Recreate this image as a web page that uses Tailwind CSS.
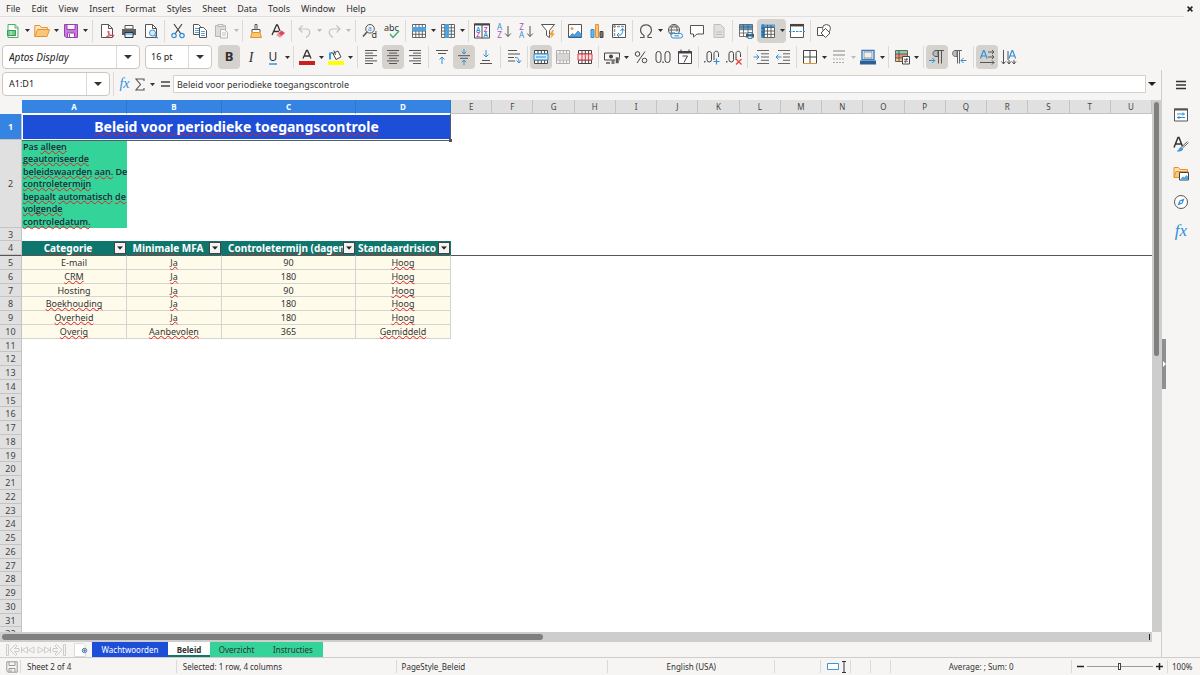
<!DOCTYPE html>
<html lang="nl">
<head>
<meta charset="utf-8">
<title>Beleid</title>
<script src="https://cdn.jsdelivr.net/npm/@tailwindcss/browser@4"></script>
</head>
<body class="flex h-screen flex-col overflow-hidden bg-[#f6f5f4] font-['Noto_Sans','Open_Sans',sans-serif] text-[9px] text-[#303030]">

<svg class="hidden" aria-hidden="true">
  <symbol id="caret" viewBox="0 0 5 3"><path d="M0 0h5L2.500 3z" fill="currentColor"/></symbol>
</svg>

<!-- Menu bar -->
<header class="flex h-[17px] shrink-0 items-stretch">
  <nav class="flex flex-1 items-center gap-[11px] border-b border-[#e0dfdd] pt-[2px] pl-[6px]" aria-label="Menu">
    <button>File</button><button>Edit</button><button>View</button><button>Insert</button><button>Format</button><button>Styles</button><button>Sheet</button><button>Data</button><button>Tools</button><button>Window</button><button>Help</button>
  </nav>
  <button class="flex w-4 items-center pl-[3px]" aria-label="Close"><svg class="size-[6px]" viewBox="0 0 5 5"><path d="M.5.5l4 4M4.500.5l-4 4" stroke="#222" stroke-width="1.300"/></svg></button>
</header>

<!-- Standard toolbar -->
<div role="toolbar" aria-label="Standard" class="flex h-[27px] shrink-0 items-center pl-[2px] [&>button]:flex [&>button]:h-6 [&>button]:w-[22px] [&>button]:shrink-0 [&>button]:items-center [&>button]:justify-center [&>button.dd]:w-[7px] [&>i]:h-[22px] [&>i]:w-[5px] [&>i]:shrink-0 [&>i]:bg-[linear-gradient(#dcdad8,#dcdad8)] [&>i]:bg-[size:1px_100%] [&>i]:bg-center [&>i]:bg-no-repeat [&>i.wide]:w-[7px] [&_svg]:size-4 [&_svg]:overflow-visible [&_svg]:fill-none [&_.dd>svg]:h-[3px] [&_.dd>svg]:w-[5px]">
  <button aria-label="New"><svg viewBox="0 0 16 16"><path d="M3 1.500h7l3 3v10H3z" fill="#fff" stroke="#4caf6a"/><path d="M10 1v4h3" stroke="#4caf6a"/><path d="M2 7h9v6H2z" fill="#35a554"/><path d="M3 9h7M3 11h7M6 8v4" stroke="#fff" stroke-width=".7"/></svg></button><button class="dd" aria-label="New options"><svg><use href="#caret"/></svg></button>
  <button aria-label="Open"><svg viewBox="0 0 16 16"><path d="M.8 13.500v-11h5l1.500 2h6v3" fill="#fbe6c5" stroke="#e8922b"/><path d="M.8 13.500 3.500 6.500h12l-2.500 7z" fill="#f9c77c" stroke="#e8922b"/></svg></button><button class="dd" aria-label="Open options"><svg><use href="#caret"/></svg></button>
  <button aria-label="Save"><svg viewBox="0 0 16 16"><path d="M1.500 1.500h13v13H3l-1.500-1.500z" fill="#c77dd8" stroke="#9b3fb5"/><path d="M4 1.500h8v5H4z" fill="#fff" stroke="#9b3fb5"/><path d="M4.500 10h7v4.500h-7z" fill="#fff" stroke="#9b3fb5"/><path d="M6.500 11v3" stroke="#9b3fb5"/></svg></button><button class="dd" aria-label="Save options"><svg><use href="#caret"/></svg></button>
  <i class="wide"></i>
  <button aria-label="Export as PDF"><svg viewBox="0 0 16 16"><path d="M2.500 1.500h7l4 4v9h-11z" fill="#fff" stroke="#555"/><path d="M9.500 1.500v4h4" stroke="#555"/><path d="M7 14.500c3-2 3.500-6 2.500-6.500s-1 2 2 4 4 1 3.500.5-4-.5-8 2z" stroke="#e0304b"/></svg></button>
  <button aria-label="Print"><svg viewBox="0 0 16 16"><path d="M4 2.500h8V6H4z" fill="#fff" stroke="#555"/><path d="M1 6h14v6H1z" fill="#5d6266"/><path d="M4 9.500h8v5H4z" fill="#e8f3fb" stroke="#333"/><path d="M4 11h8" stroke="#2f8fd8"/></svg></button>
  <button aria-label="Print preview"><svg viewBox="0 0 16 16"><path d="M2.500 1.500h7l4 4v9h-11z" fill="#fff" stroke="#555"/><path d="M9.500 1.500v4h4" stroke="#555"/><circle cx="9.500" cy="10" r="3" fill="#d9ecfa" stroke="#3c95d6"/><path d="m11.700 12.200 3 3" stroke="#3c95d6" stroke-width="1.300"/></svg></button>
  <i></i>
  <button aria-label="Cut"><svg viewBox="0 0 16 16"><path d="m4 1 7 10M12 1 5 11" stroke="#444" stroke-width="1.200"/><circle cx="4" cy="12.500" r="2.200" stroke="#2f8fd8" stroke-width="1.200"/><circle cx="12" cy="12.500" r="2.200" stroke="#2f8fd8" stroke-width="1.200"/></svg></button>
  <button aria-label="Copy"><svg viewBox="0 0 16 16"><path d="M1.500 1.500h5l2 2v8h-7z" fill="#fff" stroke="#555"/><path d="M3 5.500h4M3 7.500h4M3 9.500h4" stroke="#2f8fd8" stroke-width=".8"/><path d="M7.500 4.500h4l3 3v7h-7z" fill="#fff" stroke="#555"/><path d="M9 8.500h4M9 10.500h4M9 12.500h4" stroke="#2f8fd8" stroke-width=".8"/></svg></button>
  <button aria-label="Paste" class="opacity-50"><svg viewBox="0 0 16 16"><path d="M1.500 2.500h10v11h-10z" fill="#c5c5c5" stroke="#777"/><path d="M4 1.500h5v2H4z" fill="#eee" stroke="#777"/><path d="M6.500 6.500h4l3 3v5.500h-7z" fill="#fff" stroke="#777"/><path d="M8 10h4M8 12h4" stroke="#777" stroke-width=".8"/></svg></button><button class="dd text-[#bbb]" aria-label="Paste options"><svg><use href="#caret"/></svg></button>
  <i></i>
  <button aria-label="Clone formatting"><svg viewBox="0 0 16 16"><path d="M7 1.500h2v5H7z" fill="#fff" stroke="#555"/><path d="M4 6.500h8v3H4z" fill="#fff" stroke="#555"/><path d="M4 9.500h8l1.500 5h-11z" fill="#f9c77c" stroke="#e8922b"/></svg></button>
  <button aria-label="Clear formatting"><svg viewBox="0 0 16 16"><path d="m2 12 4.500-10h1L10 8M4 8.500h5" stroke="#333" stroke-width="1.300"/><path d="m6.500 12 5-4.500 3.500 2.500-5 4.500z" fill="#e0465a"/><path d="m6.500 12 2-1.700 3.300 2.600L10 14.500z" fill="#f39aa6"/></svg></button>
  <i></i>
  <button aria-label="Undo" class="text-[#c4c4c4]"><svg viewBox="0 0 16 16"><path d="M5.500 2.500 2 6l3.500 3.500M2 6h7c4.500 0 5.500 5 0 8.500" stroke="currentColor" stroke-width="1.200"/></svg></button><button class="dd text-[#bbb]" aria-label="Undo list"><svg><use href="#caret"/></svg></button>
  <button aria-label="Redo" class="text-[#c4c4c4]"><svg viewBox="0 0 16 16"><path d="M10.500 2.500 14 6l-3.500 3.500M14 6H7c-4.500 0-5.500 5 0 8.500" stroke="currentColor" stroke-width="1.200"/></svg></button><button class="dd text-[#bbb]" aria-label="Redo list"><svg><use href="#caret"/></svg></button>
  <i class="wide"></i>
  <button aria-label="Find and replace"><svg viewBox="0 0 16 16"><circle cx="8" cy="5.800" r="4.300" stroke="#555"/><path d="M5 9 1 13.500" stroke="#555" stroke-width="1.600"/><text x="5.700" y="8.300" font-size="7" fill="#2f8fd8">a</text><text x="9.500" y="15" font-size="9" fill="#333">d</text></svg></button>
  <button aria-label="Spelling"><svg viewBox="0 0 16 16"><text x="0" y="7.500" font-size="9" fill="#333">abc</text><path d="m6 11 3 3.500 6-6.500" stroke="#3cb068" stroke-width="1.400"/></svg></button>
  <i></i>
  <button aria-label="Row"><svg viewBox="0 0 16 16"><path d="M1.500 1.500h13v13h-13z" fill="#fff"/><path d="M1.500 1.500h13v13h-13zM1.500 4.500h13M1.500 8h13M1.500 11.300h13M4.800 1.500v13M8 1.500v13M11.300 1.500v13" stroke="#555" stroke-width=".9"/><path d="M1 4h14v4H1z" fill="#4ba3e3"/></svg></button><button class="dd" aria-label="Row options"><svg><use href="#caret"/></svg></button>
  <button aria-label="Column"><svg viewBox="0 0 16 16"><path d="M1.500 1.500h13v13h-13z" fill="#fff"/><path d="M1.500 1.500h13v13h-13zM1.500 4.800h13M1.500 8h13M1.500 11.300h13M4.800 1.500v13M8 1.500v13M11.300 1.500v13" stroke="#555" stroke-width=".9"/><path d="M5 1h4v14H5z" fill="#4ba3e3"/></svg></button><button class="dd" aria-label="Column options"><svg><use href="#caret"/></svg></button>
  <i></i>
  <button aria-label="Sort"><svg viewBox="0 0 16 16"><path d="M.5 1h15v14H.5zM8 1v14" fill="#fff" stroke="#444"/><path d="M0 1.500h16" stroke="#444" stroke-width="2"/><g font-size="6.500" font-weight="600"><text x="2" y="8.600" fill="#2f8fd8">A</text><text x="2.200" y="14" fill="#b04cc5">Z</text><text x="9.700" y="8.600" fill="#b04cc5">Z</text><text x="9.500" y="14" fill="#2f8fd8">A</text></g></svg></button>
  <button aria-label="Sort ascending"><svg viewBox="0 0 16 16"><g font-size="8"><text x="1" y="7" fill="#2f8fd8">A</text><text x="1.300" y="15" fill="#b04cc5">Z</text></g><path d="M12 3v10.500m-2.800-3 2.800 3 2.800-3" stroke="#555"/></svg></button>
  <button aria-label="Sort descending"><svg viewBox="0 0 16 16"><g font-size="8"><text x="1.300" y="7" fill="#b04cc5">Z</text><text x="1" y="15" fill="#2f8fd8">A</text></g><path d="M12 3v10.500m-2.800-3 2.800 3 2.800-3" stroke="#555"/></svg></button>
  <button aria-label="AutoFilter"><svg viewBox="0 0 16 16"><path d="M1.500 1.500h13l-5 6v7l-3-2v-5z" fill="#fff" stroke="#555"/><path d="m12.500 7-3.500 5h2.500l-1 3.500 4.500-5h-2.500l1.500-3.500z" fill="#f0a03c"/></svg></button>
  <i></i>
  <button aria-label="Insert image"><svg viewBox="0 0 16 16"><path d="M1.500 1.500h13v13h-13z" fill="#fff" stroke="#555"/><circle cx="5" cy="5.500" r="1.500" fill="#f0a03c"/><path d="m2 14 3.500-3.500 2 1.500L11 8l3.500 3.500V14z" fill="#4ba3e3" stroke="#2678b8" stroke-width=".7"/></svg></button>
  <button aria-label="Insert chart"><svg viewBox="0 0 16 16"><path d="M2 6.500h3v8H2z" fill="#6cb6ec" stroke="#2f8fd8"/><path d="M6.500 1.500h3v13h-3z" fill="#f9c77c" stroke="#e8922b"/><path d="M11 8.500h3v6h-3z" fill="#777" stroke="#444"/></svg></button>
  <button aria-label="Pivot table"><svg viewBox="0 0 16 16"><path d="M1.500 1.500h13v13h-13z" fill="#fff" stroke="#555"/><path d="M2 3.500h12M3.500 2v12" stroke="#999" stroke-width="1.500" stroke-dasharray="3 1"/><path d="M6 12c5 1 6-2 5.500-6M9.500 8l2-2.500 2 2.500M8 10l-2 2 2 2" stroke="#2f8fd8"/></svg></button>
  <i></i>
  <button aria-label="Special character"><svg viewBox="0 0 16 16"><path d="M2 14.500h4v-2C.5 9 2 1.800 8 1.800S15.500 9 10 12.500v2h4" stroke="#555" stroke-width="1.200"/></svg></button><button class="dd" aria-label="Special characters"><svg><use href="#caret"/></svg></button>
  <button aria-label="Hyperlink"><svg viewBox="0 0 16 16"><circle cx="7" cy="7" r="5.500" stroke="#555"/><path d="M1.500 7h11M3 4h8M3 10h5M7 1.500C3.500 4 3.500 9 6 12M7 1.500c3 2 3.500 5 2.800 7" stroke="#555" stroke-width=".9"/><rect x="4" y="10.500" width="11.500" height="4.500" rx="2.200" fill="#f6f5f4" stroke="#2f8fd8"/><path d="M7.500 12.800h4.500" stroke="#2f8fd8"/></svg></button>
  <button aria-label="Comment"><svg viewBox="0 0 16 16"><path d="M1.500 2.500h13v8.500H8L4.500 14v-3h-3z" fill="#fff" stroke="#555"/></svg></button>
  <button aria-label="Headers and footers" class="opacity-50"><svg viewBox="0 0 16 16"><path d="M3 1.500h6.500L13 5v9.500H3z" fill="#ccc" stroke="#888"/><path d="M5 9h6M5 11.500h6" stroke="#888"/></svg></button>
  <i></i>
  <button aria-label="Define print area"><svg viewBox="0 0 16 16"><path d="M1.500 1.500h13v12h-13z" fill="#fff"/><path d="M1.500 1.500h13v5h-13z" fill="#4ba3e3"/><path d="M1.500 1.500h13v12h-13zM1.500 4h13M1.500 6.700h13M1.500 10h13M5.500 1.500v12M10 1.500v12" stroke="#555" stroke-width=".8"/><path d="M8 11h8v3.500H8z" fill="#555"/><path d="M10 9.500h4v2h-4zM10 13h4v2.500h-4z" fill="#d9ecfa" stroke="#2f6ea0" stroke-width=".8"/></svg></button>
  <button aria-label="Freeze rows and columns" aria-pressed="true" class="rounded-l bg-[#d5d2ce]"><svg viewBox="0 0 16 16"><path d="M3.500 3.500h11v11h-11z" fill="#fff"/><path d="M1 1.500h14v3H5V15H1z" fill="#4ba3e3"/><path d="M4 4.500h10.500v10H4zM4 8h10.500M4 11.300h10.500M7.500 2v12.500M11 2v12.500" stroke="#555" stroke-width=".9"/><path d="M1 5h4M3 1v14M1 9h3M1 12h3" stroke="#1769aa"/></svg></button><button class="dd rounded-r bg-[#d5d2ce]" aria-label="Freeze options"><svg><use href="#caret"/></svg></button>
  <button aria-label="Split window"><svg viewBox="0 0 16 16"><path d="M1.500 1.500h13v13h-13z" fill="#fff" stroke="#555"/><path d="M1 2.200h14" stroke="#444" stroke-width="2.500"/><path d="M0 8.500h16" stroke="#2f8fd8" stroke-dasharray="2.500 1"/></svg></button>
  <i></i>
  <button aria-label="Show draw functions"><svg viewBox="0 0 16 16"><path d="M1.500 4.500h8v8h-8z" fill="#fff" stroke="#555"/><circle cx="10.500" cy="5.500" r="4" fill="#fff" stroke="#555"/><path d="m9.500 5.500 4.500 4.500-4.500 4.500L5 10z" fill="#fff" stroke="#555"/></svg></button>
</div>

<!-- Formatting toolbar -->
<div role="toolbar" aria-label="Formatting" class="flex h-[26px] shrink-0 items-center pl-[2px] [&>button]:flex [&>button]:h-6 [&>button]:w-[22px] [&>button]:shrink-0 [&>button]:items-center [&>button]:justify-center [&>button]:rounded [&>button[aria-pressed=true]]:bg-[#d5d2ce] [&>button.dd]:w-[7px] [&>i]:h-[22px] [&>i]:w-[5px] [&>i]:shrink-0 [&>i]:bg-[linear-gradient(#dcdad8,#dcdad8)] [&>i]:bg-[size:1px_100%] [&>i]:bg-center [&>i]:bg-no-repeat [&>i.wide]:w-[6px] [&>button>svg]:size-4 [&_svg]:fill-none [&_.dd>svg]:h-[3px] [&_.dd>svg]:w-[5px]">
  <div class="mr-[5px] flex h-6 w-[138px] shrink-0 overflow-hidden rounded-[4px] border border-[#cdc7c2] bg-white">
    <input aria-label="Font name" value="Aptos Display" class="min-w-0 flex-1 pl-[6px] text-[10px] italic text-[#222] outline-none">
    <button aria-label="Font list" class="flex w-[23px] items-center justify-center border-l border-[#dcd8d4]"><svg class="h-[4px] w-[8px]" viewBox="0 0 8 4"><path d="M0 0h8L4 4z" fill="#333"/></svg></button>
  </div>
  <div class="mr-[6px] flex h-6 w-[67px] shrink-0 overflow-hidden rounded-[4px] border border-[#cdc7c2] bg-white">
    <input aria-label="Font size" value="16 pt" class="min-w-0 flex-1 pl-[5px] text-[9px] text-[#222] outline-none">
    <button aria-label="Size list" class="flex w-[23px] items-center justify-center border-l border-[#dcd8d4]"><svg class="h-[4px] w-[8px]" viewBox="0 0 8 4"><path d="M0 0h8L4 4z" fill="#333"/></svg></button>
  </div>
  <button aria-label="Bold" aria-pressed="true" class="text-[13px] font-bold">B</button>
  <button aria-label="Italic" class="font-['Liberation_Serif',serif] text-[14px] italic">I</button>
  <button aria-label="Underline"><span class="border-b-2 border-[#5fb1ea] text-[12px] leading-[13px]">U</span></button><button class="dd" aria-label="Underline style"><svg><use href="#caret"/></svg></button>
  <i></i>
  <button aria-label="Font color"><svg viewBox="0 0 16 16"><path d="m4 9.500 3.500-8h1l3.500 8M5.500 7h5" stroke="#333" stroke-width="1.300"/><path d="M0 12h16v4H0z" fill="#c9211e"/></svg></button><button class="dd" aria-label="Font color list"><svg><use href="#caret"/></svg></button>
  <button aria-label="Highlighting"><svg viewBox="0 0 16 16"><path d="M5 4.500 10 2l3 6-5 2.500z" fill="#fff" stroke="#444"/><path d="M7.500 6 6 1.500" stroke="#444"/><path d="M2 3.500v7M3 3.500l2 1" stroke="#2f8fd8" stroke-width="1.800"/><path d="M0 12h16v4H0z" fill="#ffff00"/></svg></button><button class="dd" aria-label="Highlighting list"><svg><use href="#caret"/></svg></button>
  <i class="wide"></i>
  <button aria-label="Align left"><svg viewBox="0 0 16 16"><path d="M2 1.500h12M2 4.100h8M2 6.700h12M2 9.300h8M2 11.900h12M2 14.500h8" stroke="#555"/></svg></button>
  <button aria-label="Align center" aria-pressed="true"><svg viewBox="0 0 16 16"><path d="M2 1.500h12M4 4.100h8M2 6.700h12M4 9.300h8M2 11.900h12M4 14.500h8" stroke="#555"/></svg></button>
  <button aria-label="Align right"><svg viewBox="0 0 16 16"><path d="M2 1.500h12M6 4.100h8M2 6.700h12M6 9.300h8M2 11.900h12M6 14.500h8" stroke="#555"/></svg></button>
  <i></i>
  <button aria-label="Align top"><svg viewBox="0 0 16 16"><path d="M2 1.500h12M4 4.500h8" stroke="#555"/><path d="M8 15V8m-2.500 2.500L8 8l2.500 2.500" stroke="#2f8fd8"/></svg></button>
  <button aria-label="Center vertically" aria-pressed="true"><svg viewBox="0 0 16 16"><path d="M2 6.700h12M4 9.300h8" stroke="#555"/><path d="M8 0v5M5.800 2.800 8 5l2.200-2.200M8 16v-5m-2.200 2.200L8 11l2.200 2.200" stroke="#2f8fd8"/></svg></button>
  <button aria-label="Align bottom"><svg viewBox="0 0 16 16"><path d="M4 11.500h8M2 14.500h12" stroke="#555"/><path d="M8 1v7M5.500 5.500 8 8l2.500-2.500" stroke="#2f8fd8"/></svg></button>
  <i class="wide"></i>
  <button aria-label="Wrap text"><svg viewBox="0 0 16 16"><path d="M2 1.500h9M2 5h12M2 8.500h6M2 12h7" stroke="#555"/><path d="M9 8.500c3 0 4 1 4 5M10.500 11.500 13 14l2-2.500" stroke="#2f8fd8"/></svg></button>
  <i></i>
  <button aria-label="Merge and center" aria-pressed="true"><svg viewBox="0 0 16 16"><path d="M1.500 1.500h13v13h-13z" fill="#fff" stroke="#444"/><path d="M1.500 5h13M1.500 11h13M5 1.500V5M8.300 1.500V5M11.600 1.500V5M5 11v3.500M8.300 11v3.500M11.600 11v3.500" stroke="#444"/><path d="M1 5h14v6H1z" fill="#d9ecfa" stroke="#2f8fd8"/><path d="M3 8h10" stroke="#2f8fd8"/></svg></button>
  <button aria-label="Merge cells" class="opacity-40"><svg viewBox="0 0 16 16"><path d="M1.500 1.500h13v13h-13zM1.500 5h13M1.500 11h13M5 1.500V5M8.300 1.500V5M11.600 1.500V5M5 11v3.500M8.300 11v3.500M11.600 11v3.500" stroke="#444"/><path d="M2 5.500h12v5H2z" fill="#aaa"/></svg></button>
  <button aria-label="Unmerge cells"><svg viewBox="0 0 16 16"><path d="M1.500 1.500h13v13h-13z" fill="#fff" stroke="#444"/><path d="M1.500 5h13M1.500 11h13M5 1.500V5M8.300 1.500V5M11.600 1.500V5M5 11v3.500M8.300 11v3.500M11.600 11v3.500" stroke="#444"/><path d="M1 5h14v6H1zM5 5v6M8.300 5v6M11.600 5v6" fill="#fde3e5" stroke="#d93a45"/></svg></button>
  <i></i>
  <button aria-label="Currency"><svg viewBox="0 0 16 16"><path d="M.5 4h15v7H.5z" stroke="#444"/><circle cx="7" cy="7.500" r="2" fill="#444"/><path d="M7.500 11h3v4h-3z" fill="#777"/><path d="M11.500 8h3.500v6.500h-3.500z" fill="#555" stroke="#f6f5f4" stroke-width=".6"/><path d="M2 14h4" stroke="#555" stroke-width="1.500"/></svg></button><button class="dd" aria-label="Currency list"><svg><use href="#caret"/></svg></button>
  <button aria-label="Percent"><svg viewBox="0 0 16 16"><circle cx="4.500" cy="5" r="2.300" stroke="#444"/><circle cx="11.500" cy="11.500" r="2.300" stroke="#444"/><path d="M12 2.500 4 14" stroke="#444"/></svg></button>
  <button aria-label="Number"><svg viewBox="0 0 16 16"><rect x="1" y="2.500" width="5" height="11" rx="2.500" stroke="#444"/><rect x="10" y="2.500" width="5" height="11" rx="2.500" stroke="#444"/><path d="M8 12.500v1.500" stroke="#444" stroke-width="1.300"/></svg></button>
  <button aria-label="Date"><svg viewBox="0 0 16 16"><path d="M1.500 2.500h13v12h-13z" fill="#fff" stroke="#444"/><path d="M1 3.500h14" stroke="#444" stroke-width="2"/><path d="M4 .5v3M12 .5v3" stroke="#444"/><path d="M5.500 7h5L7 13.500" stroke="#444"/></svg></button>
  <i></i>
  <button aria-label="Add decimal place"><svg viewBox="0 0 16 16"><path d="M.8 12v1.500" stroke="#444" stroke-width="1.300"/><rect x="3" y="2.500" width="4.500" height="10.500" rx="2.250" stroke="#444"/><path d="M10 11V4.500c0-3 4.500-3 4.500 0V8" stroke="#444"/><path d="M12.500 9.500v6M9.500 12.500h6" stroke="#2f8fd8" stroke-width="1.200"/></svg></button>
  <button aria-label="Delete decimal place"><svg viewBox="0 0 16 16"><path d="M.8 12v1.500" stroke="#444" stroke-width="1.300"/><rect x="3" y="2.500" width="4.500" height="10.500" rx="2.250" stroke="#444"/><path d="M10 11V4.500c0-3 4.500-3 4.500 0V8" stroke="#444"/><path d="m10 10 5.500 5.500m0-5.500L10 15.500" stroke="#e04040" stroke-width="1.200"/></svg></button>
  <i></i>
  <button aria-label="Increase indent"><svg viewBox="0 0 16 16"><path d="M4 1.500h12M8 4.800h8M8 8h8M8 11.300h8M4 14.500h12" stroke="#666"/><path d="M.5 8h5.500M3.500 5.500 6 8l-2.500 2.500" stroke="#2f8fd8"/></svg></button>
  <button aria-label="Decrease indent"><svg viewBox="0 0 16 16"><path d="M3 1.500h12M8 4.800h7M8 8h7M8 11.300h7M3 14.500h12" stroke="#666"/><path d="M6.500 8H1M3.500 5.500 1 8l2.500 2.500" stroke="#2f8fd8"/></svg></button>
  <i></i>
  <button aria-label="Borders"><svg viewBox="0 0 16 16"><path d="M1.500 1.500h13v13h-13z" fill="#fff" stroke="#444"/><path d="M8 1.500v13M1.500 8h13" stroke="#444"/><path d="M1 14.500h14" stroke="#e8922b"/></svg></button><button class="dd" aria-label="Borders list"><svg><use href="#caret"/></svg></button>
  <button aria-label="Border style"><svg viewBox="0 0 16 16"><path d="M2 2h12M2 6h12" stroke="#aaa" stroke-width="1.500"/><path d="M2 10h12M2 13.500h12" stroke="#aaa" stroke-dasharray="2 1"/></svg></button><button class="dd text-[#bbb]" aria-label="Border styles"><svg><use href="#caret"/></svg></button>
  <button aria-label="Border color"><svg viewBox="0 0 16 16"><path d="M2 1.500h12v9H2z" fill="#fff" stroke="#3a7cc0" stroke-width="1.400"/><path d="M4 3h8v6H4z" fill="#eee" stroke="#777" stroke-width=".7"/><path d="M0 11.500h16v4H0z" fill="#2a6099"/></svg></button><button class="dd" aria-label="Border colors"><svg><use href="#caret"/></svg></button>
  <i></i>
  <button aria-label="Conditional formatting"><svg viewBox="0 0 16 16"><path d="M1.500 1.500h12v11h-12z" fill="#fff"/><path d="M1.500 2h12v3h-12z" fill="#7fd49a"/><path d="M1.500 5h12v4h-12z" fill="#f08a80"/><path d="M1.500 9h7v3.500h-7z" fill="#f9c77c"/><path d="M1.500 1.500h12v11h-12zM5 1.500v11M1.500 5h12M1.500 9h12" stroke="#555" stroke-width=".9"/><path d="M8.500 7.500h7v7.500h-7z" fill="#fff" stroke="#444"/><path d="M10 10.300h4M10 12.300h4M13 9l-2 5" stroke="#444" stroke-width=".8"/></svg></button><button class="dd" aria-label="Conditional list"><svg><use href="#caret"/></svg></button>
  <i class="wide"></i>
  <button aria-label="Left-to-right" aria-pressed="true"><svg viewBox="0 0 16 16"><path d="M9 1.500H7c-4 0-4 6 0 6h2z" stroke="#555" fill="#bbb"/><path d="M9.500 14.500v-13M12.500 14.500v-13M6.500 1.500H15" stroke="#555"/><path d="M0 11.500h5.500M3.300 9l2.500 2.500L3.300 14" stroke="#2f8fd8"/></svg></button>
  <button aria-label="Right-to-left"><svg viewBox="0 0 16 16"><path d="M6 1.500H4.500c-4 0-4 6 0 6H6z" stroke="#666" fill="#bbb"/><path d="M6.500 14.500v-13M8.500 14.500v-13M3.500 1.500H11" stroke="#666"/><path d="M15.500 11.500H10m2.500-2.500L10 11.500l2.500 2.500" stroke="#2f8fd8"/></svg></button>
  <i class="wide"></i>
  <button aria-label="Text left to right" aria-pressed="true"><svg viewBox="0 0 16 16"><path d="m1.500 9.500 3-8h.6l3 8M2.500 7h4.500" stroke="#2f8fd8" stroke-width="1.200"/><path d="M9 3h6M9 8h6M1 13.500h14M13 1l2 2-2 2M13 6l2 2-2 2M13 11.500l2 2-2 2" stroke="#555"/></svg></button>
  <button aria-label="Text top to bottom"><svg viewBox="0 0 16 16"><path d="m8 9.500 3-8h.6l3 8M9 7h4.500" stroke="#2f8fd8" stroke-width="1.200"/><path d="M2.500 1v14M8 11v4M13 11v4M.5 12.500l2 2.500 2-2.500M6 12.500 8 15l2-2.500M11 12.500l2 2.500 2-2.500M7 2v9" stroke="#555"/></svg></button>
</div>

<div class="flex min-h-0 flex-1">
  <main class="flex min-w-0 flex-1 flex-col">

    <!-- Formula bar -->
    <div class="flex h-[30px] shrink-0 items-start pt-[2px]">
      <div class="ml-[2px] flex h-6 w-[108px] overflow-hidden rounded-[4px] border border-[#cdc7c2] bg-white">
        <input aria-label="Name box" value="A1:D1" class="min-w-0 flex-1 pl-[6px] text-[9px] text-[#222] outline-none">
        <button aria-label="Names" class="flex w-[23px] items-center justify-center border-l border-[#dcd8d4]"><svg class="h-[4px] w-[8px]" viewBox="0 0 8 4"><path d="M0 0h8L4 4z" fill="#333"/></svg></button>
      </div>
      <div class="ml-[3px] flex h-6 flex-1 items-center border-l border-[#dcdad8]">
        <button aria-label="Function wizard" class="w-[20px] pl-px text-center font-['Liberation_Serif',serif] text-[14px] leading-6 italic text-[#2f8fd8]">fx</button>
        <button aria-label="Sum" class="flex w-[12px] justify-center"><svg class="h-[13px] w-[10px]" viewBox="0 0 10 13" fill="none"><path d="M9 3V1H1l4.500 5.500L1 12h8v-2" stroke="#555" stroke-width="1.100"/></svg></button>
        <button aria-label="Sum functions" class="flex w-[12px] justify-center"><svg class="h-[3px] w-[5px]"><use href="#caret"/></svg></button>
        <button aria-label="Formula" class="flex w-[15px] justify-center pr-px"><svg class="h-[6px] w-[9px]" viewBox="0 0 9 6"><path d="M0 1h9M0 5h9" stroke="#444" stroke-width="1.500"/></svg></button>
        <input aria-label="Input line" value="Beleid voor periodieke toegangscontrole" class="h-[18px] min-w-0 flex-1 border border-[#d5d2ce] bg-white pl-[3px] text-[9px] text-[#333] outline-none">
        <button aria-label="Expand formula bar" class="flex w-[15px] justify-center pr-1"><svg class="h-[4px] w-[8px]" viewBox="0 0 8 4"><path d="M0 0h8L4 4z" fill="#222"/></svg></button>
      </div>
    </div>

    <div class="flex min-h-0 flex-1">
      <!-- Sheet -->
      <div class="min-w-0 flex-1 overflow-hidden bg-white">
        <table class="w-full table-fixed border-separate border-spacing-0 text-center text-[9px] leading-[12px] text-[#333] [&_td]:p-0 [&_th]:p-0 [&_tbody_th[scope=row]]:border-r [&_tbody_th[scope=row]]:border-b [&_tbody_th[scope=row]]:border-[#c4c4c4] [&_tbody_th[scope=row]]:bg-[#e0e0e0] [&_tbody_th[scope=row]]:font-normal [&_tbody_th[scope=row]]:text-[#444] [&_u]:decoration-[#e02020] [&_u]:decoration-wavy [&_u]:decoration-[0.5px] [&_u]:underline-offset-0 [&_u]:[text-decoration-skip-ink:none] [&_.data>td]:border-r [&_.data>td]:border-b [&_.data>td]:border-[#d4d4d0] [&_.data>td]:bg-[#fffbeb]">
          <colgroup><col class="w-[22px]"><col class="w-[105px]"><col class="w-[95px]"><col class="w-[134px]"><col class="w-[95px]"><col span="17"></colgroup>
          <thead>
            <tr class="h-[14px] text-[8px] text-[#444] [&>th]:border-r [&>th]:border-b [&>th]:border-[#c4c4c4] [&>th]:bg-[#e0e0e0] [&>th]:font-normal [&>th.sel]:border-[#2a76d2] [&>th.sel]:border-b-white [&>th.sel]:bg-[#3584e4] [&>th.sel]:font-bold [&>th.sel]:text-white">
              <td class="bg-[#f6f5f4]"></td>
              <th scope="col" class="sel">A</th><th scope="col" class="sel">B</th><th scope="col" class="sel">C</th><th scope="col" class="sel">D</th><th scope="col">E</th><th scope="col">F</th><th scope="col">G</th><th scope="col">H</th><th scope="col">I</th><th scope="col">J</th><th scope="col">K</th><th scope="col">L</th><th scope="col">M</th><th scope="col">N</th><th scope="col">O</th><th scope="col">P</th><th scope="col">Q</th><th scope="col">R</th><th scope="col">S</th><th scope="col">T</th><th scope="col">U</th>
            </tr>
          </thead>
          <tbody class="[&>tr]:h-[14px] [&>tr:nth-child(4n+3)]:h-[13px] [&>tr:nth-child(4n+3)]:leading-[11px] [&>tr.title]:h-[26px] [&>tr.note]:h-[88px]">
            <tr class="title">
              <th scope="row" class="bg-[#3584e4]! font-bold! text-white!">1</th>
              <td colspan="4" class="relative bg-[#1d4ed8] text-[14px] leading-[20px] font-bold text-white shadow-[inset_0_0_0_1px_#fff]"><u>Beleid voor periodieke toegangscontrole</u><span class="absolute inset-x-0 -bottom-px border-b border-[#555a66]"></span><span class="absolute inset-y-0 right-0 border-r border-[#555a66]"></span><span class="absolute -right-px -bottom-[2px] size-[3px] bg-[#555]"></span></td>
              <td colspan="17"></td>
            </tr>
            <tr class="note">
              <th scope="row">2</th>
              <td class="bg-[#34d399] pl-px! text-left align-top font-['Open_Sans','Noto_Sans',sans-serif] text-[9px] font-semibold whitespace-nowrap text-[#1f2937]"><div class="grid h-[87px] grid-rows-7 leading-[13px]"><span>Pas <u>alleen</u></span><u>geautoriseerde</u><span><u>beleidswaarden</u> <u>aan.</u> De</span><u>controletermijn</u><span><u>bepaalt</u> <u>automatisch</u> <u>de</u></span><u>volgende</u><u>controledatum.</u></div></td>
              <td colspan="20"></td>
            </tr>
            <tr><th scope="row">3</th><td colspan="21"></td></tr>
            <tr class="[&_button]:mr-px [&_button]:flex [&_button]:size-3 [&_button]:shrink-0 [&_button]:items-center [&_button]:justify-center [&_button]:border [&_button]:border-[#444] [&_button]:bg-[#f3f3f3] [&_button]:text-[#222] [&_div]:flex [&_div]:h-[14px] [&_div]:items-center [&_div]:overflow-hidden [&_div]:text-[10px] [&_div]:leading-[14px] [&_div]:whitespace-nowrap [&_div]:text-white [&_div>span]:flex-1 [&_div>span]:overflow-hidden [&_td]:bg-[#0f766e] [&_td]:font-bold [&_td:last-child]:bg-white">
              <th scope="row">4</th>
              <td><div><span><u>Categorie</u></span><button aria-label="Filter Categorie"><svg class="h-[4px] w-[6px]" viewBox="0 0 5 3"><use href="#caret"/></svg></button></div></td>
              <td><div><span><u>Minimale</u> MFA</span><button aria-label="Filter Minimale MFA"><svg class="h-[4px] w-[6px]" viewBox="0 0 5 3"><use href="#caret"/></svg></button></div></td>
              <td><div><span class="pl-[6px] text-left"><u>Controletermijn</u> (<u>dagen</u>)</span><button aria-label="Filter Controletermijn"><svg class="h-[4px] w-[6px]" viewBox="0 0 5 3"><use href="#caret"/></svg></button></div></td>
              <td><div><span><u>Standaardrisico</u></span><button aria-label="Filter Standaardrisico"><svg class="h-[4px] w-[6px]" viewBox="0 0 5 3"><use href="#caret"/></svg></button></div></td>
              <td colspan="17"></td>
            </tr>
            <tr class="data h-[15px]! [&>*]:border-t [&>*]:border-t-[#555]! [&>td:last-child]:border-r-0! [&>td:last-child]:border-b-0! [&>td:last-child]:bg-white!"><th scope="row">5</th><td>E-mail</td><td><u>Ja</u></td><td>90</td><td><u>Hoog</u></td><td colspan="17"></td></tr>
            <tr class="data"><th scope="row">6</th><td><u>CRM</u></td><td><u>Ja</u></td><td>180</td><td><u>Hoog</u></td></tr>
            <tr class="data"><th scope="row">7</th><td>Hosting</td><td><u>Ja</u></td><td>90</td><td><u>Hoog</u></td></tr>
            <tr class="data"><th scope="row">8</th><td><u>Boekhouding</u></td><td><u>Ja</u></td><td>180</td><td><u>Hoog</u></td></tr>
            <tr class="data"><th scope="row">9</th><td><u>Overheid</u></td><td><u>Ja</u></td><td>180</td><td><u>Hoog</u></td></tr>
            <tr class="data"><th scope="row">10</th><td><u>Overig</u></td><td><u>Aanbevolen</u></td><td>365</td><td><u>Gemiddeld</u></td></tr>
            <tr><th scope="row">11</th></tr>
            <tr><th scope="row">12</th></tr>
            <tr><th scope="row">13</th></tr>
            <tr><th scope="row">14</th></tr>
            <tr><th scope="row">15</th></tr>
            <tr><th scope="row">16</th></tr>
            <tr><th scope="row">17</th></tr>
            <tr><th scope="row">18</th></tr>
            <tr><th scope="row">19</th></tr>
            <tr><th scope="row">20</th></tr>
            <tr><th scope="row">21</th></tr>
            <tr><th scope="row">22</th></tr>
            <tr><th scope="row">23</th></tr>
            <tr><th scope="row">24</th></tr>
            <tr><th scope="row">25</th></tr>
            <tr><th scope="row">26</th></tr>
            <tr><th scope="row">27</th></tr>
            <tr><th scope="row">28</th></tr>
            <tr><th scope="row">29</th></tr>
            <tr><th scope="row">30</th></tr>
            <tr><th scope="row">31</th></tr>
            <tr><th scope="row">32</th></tr>
          </tbody>
        </table>
      </div>
      <div class="flex w-[9px] shrink-0 justify-center bg-[#cdcdcd] pt-[2px]" role="scrollbar" aria-label="Vertical scroll" aria-controls="tabs" aria-valuenow="0"><div class="h-[48%] w-[5px] rounded-full bg-[#7f7f7f]"></div></div>
    </div>

    <div class="mr-[9px] flex h-[10px] shrink-0 items-center justify-between bg-[#cdcdcd] pl-[2px]" role="scrollbar" aria-label="Horizontal scroll" aria-controls="tabs" aria-valuenow="0"><div class="h-[6px] w-[47%] rounded-full bg-[#7f7f7f]"></div><div class="mr-[2px] h-[6px] w-px bg-[#222]"></div></div>

    <!-- Sheet tabs -->
    <div id="tabs" class="flex h-[15px] shrink-0 items-stretch text-[8px] leading-[14px]">
      <div class="flex w-[70px] items-center justify-between pr-1 pl-[6px] [&_svg]:h-[12px] [&_svg]:w-[14px] [&_svg]:fill-none [&_svg]:stroke-[#cfcdcb]">
        <button aria-label="First sheet"><svg viewBox="0 0 14 12"><path d="M.5.5h2v11h-2zM13 4.500H8.500L11 2 9.500.5 4 6l5.500 5.500L11 10 8.500 7.500H13z"/></svg></button>
        <button aria-label="Previous sheet"><svg viewBox="0 0 14 12"><path d="M6.500 3v6L1 6zM13 3v6L7.500 6zM.5 3v6"/></svg></button>
        <button aria-label="Next sheet"><svg viewBox="0 0 14 12"><path d="M1 3v6l5.500-3zM7.500 3v6L13 6zM13.500 3v6"/></svg></button>
        <button aria-label="Last sheet"><svg viewBox="0 0 14 12"><path d="M13.500.5h-2v11h2zM1 4.500h4.500L3 2 4.500.5 10 6l-5.500 5.500L3 10l2.500-2.500H1z"/></svg></button>
      </div>
      <button aria-label="Add sheet" class="flex w-[22px] items-center pl-[4px]"><svg class="h-[14px] w-[14px]" viewBox="0 0 14 14" fill="none"><path d="M.5.5h9l2 3v10H.5z" fill="#fff" stroke="#dedcda"/><circle cx="10.500" cy="7.500" r="2.200" fill="#fff" stroke="#3a6fa8"/><path d="M10.500 6v3M9 7.500h3" stroke="#3a6fa8" stroke-width=".7"/></svg></button>
      <div role="tablist" class="flex [&>button]:text-center">
        <button role="tab" class="w-[76px] bg-[#1d4ed8] text-white">Wachtwoorden</button>
        <button role="tab" aria-selected="true" class="w-[42px] bg-white font-bold shadow-[inset_0_-2px_0_#0f766e]">Beleid</button>
        <button role="tab" class="w-[53px] bg-[#34d399]">Overzicht</button>
        <button role="tab" class="w-[60px] bg-[#34d399]">Instructies</button>
      </div>
    </div>
  </main>

  <!-- Sidebar -->
  <aside class="relative flex w-[39px] shrink-0 flex-col items-center gap-[13px] border-l border-[#d0cecc] pt-[8px] [&>button]:flex [&>button]:size-4 [&>button]:items-center [&>button]:justify-center [&_svg]:fill-none">
    <button aria-label="Sidebar settings"><svg class="size-4" viewBox="0 0 16 16"><path d="M3 3.500h10M3 7h10M3 10.500h10" stroke="#333" stroke-width="1.500"/></svg></button>
    <button aria-label="Properties"><svg class="size-4" viewBox="0 0 16 16"><path d="M1.500 2h13v12h-13z" fill="#fff" stroke="#555"/><path d="M1 2.500h14" stroke="#555" stroke-width="2"/><path d="M4 7h8M4 10.500h8M10 5.500v3M6 9v3" stroke="#2f8fd8"/></svg></button>
    <button aria-label="Styles"><svg class="size-4" viewBox="0 0 16 16"><path d="M1 11.500 5 1.500h1l3.500 9M2.500 8h6" stroke="#333" stroke-width="1.500"/><path d="M15 6 9.500 11" stroke="#555" stroke-width="2.200"/><path d="M15 6 9.500 11" stroke="#fff"/><path d="M4.500 15c2 0 1.500-3.500 4-3.500 3 1.500 0 4-4 3.500z" fill="#4ba3e3" stroke="#2f8fd8"/></svg></button>
    <button aria-label="Gallery"><svg class="size-4" viewBox="0 0 16 16"><path d="M1 12V2.500h4.500l1.500 2h7.500V7" fill="#fbe0b5" stroke="#e8922b"/><path d="M1 12.500 3 6.500h12v6z" fill="#f9c77c" stroke="#e8922b"/><path d="M6.500 7.500h9v7.500h-9z" fill="#fff" stroke="#444"/><path d="m7 14.500 3-3 1.500 1 2-2.500 1.700 2v2.500z" fill="#4ba3e3"/></svg></button>
    <button aria-label="Navigator"><svg class="size-4" viewBox="0 0 16 16"><circle cx="8" cy="8" r="6.500" fill="#fff" stroke="#555"/><path d="m11.500 4.500-2 5-5 2 2-5z" fill="#2f8fd8"/><circle cx="8" cy="8" r="1" fill="#fff"/></svg></button>
    <button aria-label="Functions" class="font-['Liberation_Serif',serif] text-[17px] leading-4 italic text-[#2f8fd8]">fx</button>
    <button aria-label="Hide sidebar" class="absolute top-[269px] left-0 h-[50px]! w-[4px]! bg-[#8f8f8f]"><svg class="h-[6px] w-[3px]" viewBox="0 0 3 6"><path d="M0 0v6l3-3z" fill="#fff"/></svg></button>
  </aside>
</div>

<!-- Status bar -->
<footer class="flex h-[18px] shrink-0 items-center border-t border-[#cfcdcb] text-[8px] leading-[13px] [&>div]:h-[13px] [&>div]:border-l [&>div]:border-[#dcdad8]">
  <button aria-label="Save document" class="flex w-5 shrink-0 items-center pl-[6px]"><svg class="size-[12px]" viewBox="0 0 12 12" fill="none"><path d="M.8.8h10.400v10.400H2L.8 10zM3 1v3.500h6V1M3 11V7.500h6V11M5 8.500V11" stroke="#999"/></svg></button>
  <div class="flex-[149] pl-[6px]">Sheet 2 of 4</div>
  <div class="flex-[213] pl-[6px]">Selected: 1 row, 4 columns</div>
  <div class="flex-[206] pl-[5px]">PageStyle_Beleid</div>
  <div class="flex-[166] text-center">English (USA)</div>
  <div class="w-[46px] shrink-0"></div>
  <div class="flex w-[30px] shrink-0 items-center gap-[2px] pl-[6px]"><svg class="h-[7px] w-[12px]" viewBox="0 0 12 7"><path d="M.5.5h11v6H.5z" fill="#fff" stroke="#3c95d6"/></svg><svg class="h-[12px] w-[6px]" viewBox="0 0 6 12" fill="none"><path d="M1 .5h4M1 11.500h4M3 .5v11" stroke="#333"/></svg></div>
  <div class="w-[20px] shrink-0"></div>
  <div class="w-[20px] shrink-0"></div>
  <div class="flex-[180] text-center">Average: ; Sum: 0</div>
  <div class="flex w-[96px] shrink-0 items-center justify-between pr-[4px] pl-[5px]">
    <button aria-label="Zoom out"><svg class="size-[7px]" viewBox="0 0 7 7"><path d="M0 3.500h7" stroke="#222" stroke-width="1.500"/></svg></button>
    <input type="range" aria-label="Zoom" min="0" max="100" value="49" class="h-[8px] w-[66px] appearance-none bg-[linear-gradient(#999,#999)] bg-[size:100%_1px] bg-center bg-no-repeat [&::-webkit-slider-thumb]:h-[7px] [&::-webkit-slider-thumb]:w-[3px] [&::-webkit-slider-thumb]:appearance-none [&::-webkit-slider-thumb]:border [&::-webkit-slider-thumb]:border-[#444] [&::-webkit-slider-thumb]:bg-white">
    <button aria-label="Zoom in"><svg class="size-[7px]" viewBox="0 0 7 7"><path d="M0 3.500h7M3.500 0v7" stroke="#222" stroke-width="1.500"/></svg></button>
  </div>
  <div class="w-[33px] shrink-0 pl-[4px]">100%</div>
</footer>
</body>
</html>
